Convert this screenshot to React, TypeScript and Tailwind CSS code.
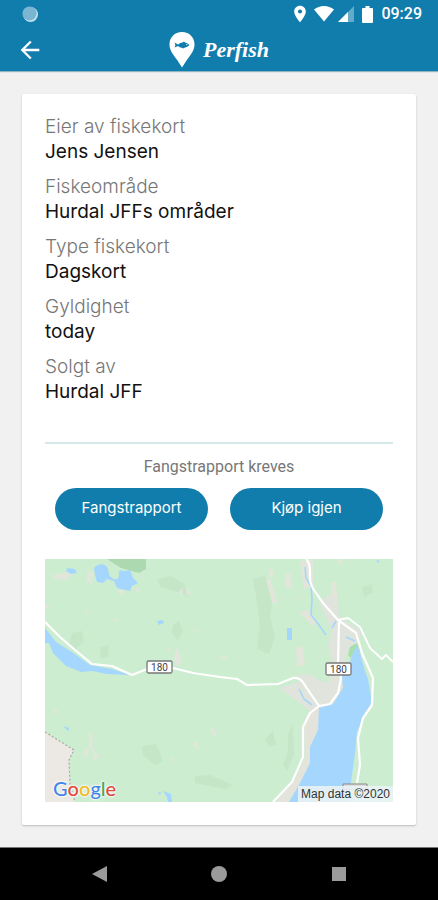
import { MdArrowBack, MdLocationOn } from "react-icons/md";

const details = [
  { label: "Eier av fiskekort", value: "Jens Jensen" },
  { label: "Fiskeområde", value: "Hurdal JFFs områder" },
  { label: "Type fiskekort", value: "Dagskort" },
  { label: "Gyldighet", value: "today" },
  { label: "Solgt av", value: "Hurdal JFF" },
];

function StatusBar() {
  return (
    <div className="flex h-7 items-center justify-between pl-[22px] pr-4 text-white">
      <svg viewBox="0 0 16 16" className="size-4" aria-hidden="true">
        <circle cx="8.5" cy="8.5" r="7.5" fill="#c6e2ee" />
        <circle cx="7.5" cy="7.5" r="7" fill="#7ab6d2" />
      </svg>
      <div className="flex items-center">
        <MdLocationOn className="mr-1 size-5" aria-hidden="true" />
        <svg viewBox="0 0 20 16" className="mr-1 h-4 w-5" fill="currentColor" aria-hidden="true">
          <path d="M10 15.500 0 3.500C3 1.200 6.200 0 10 0s7 1.200 10 3.500z" />
        </svg>
        <svg viewBox="0 0 16 16" className="mr-2 size-4" fill="currentColor" aria-hidden="true">
          <path d="M16 0v16H0z" opacity=".35" />
          <path d="M10 6v10H0z" />
        </svg>
        <svg viewBox="0 0 11 17" className="mr-2 h-[17px] w-[11px]" fill="currentColor" aria-hidden="true">
          <path d="M3.500 0h4v2H10a1 1 0 0 1 1 1v13a1 1 0 0 1-1 1H1a1 1 0 0 1-1-1V3a1 1 0 0 1 1-1h2.500z" />
        </svg>
        <time className="font-[Roboto,sans-serif] text-base leading-5 font-medium">09:29</time>
      </div>
    </div>
  );
}

function Logo() {
  return (
    <div className="flex items-center gap-2 text-white">
      <svg viewBox="0 0 26 36" className="h-9 w-[26px]" aria-hidden="true">
        <path d="M13 0C5.500 0 .5 5.500 .5 12.500c0 6 4 10.500 8 16L13 35.500l4.500-7c4-5.500 8-10 8-16C25.500 5.500 20.500 0 13 0z" fill="#fff" />
        <path d="M5.500 10.500l3.500 2c1.500-1.400 3-2 4.500-2.100l1.500-.8 1 .9c2.200.4 3.500 1.400 4.300 2.600-1 1.500-2.700 2.400-4.800 2.700l-1.500.8-.8-.8c-1.700-.2-3-.8-4.200-1.900l-3.300 1.600.7-2.600z" fill="#117dad" />
        <circle cx="17.800" cy="12.600" r=".6" fill="#fff" />
      </svg>
      <span className="font-['Liberation_Serif',serif] text-[22px] leading-7 font-bold italic">Perfish</span>
    </div>
  );
}

function RoadSign({ x, y }: { x: number; y: number }) {
  return (
    <g>
      <rect x={x} y={y} width="25" height="12" rx="1.500" fill="#fff" stroke="#777" strokeWidth="1.300" />
      <text x={x + 12.5} y={y + 9.5} textAnchor="middle" fontSize="10" fill="#444" className="font-[Roboto,sans-serif]">
        180
      </text>
    </g>
  );
}

function AreaMap() {
  return (
    <div className="relative">
      <svg viewBox="0 0 348 243" className="block w-full" role="img" aria-label="Kart over fiskeområdet">
        <rect width="348" height="243" fill="#cdedd0" />
        <path d="M62 0h39v10l-7 4-18-5z" fill="#acd9b0" />
        <g fill="#c5e7c8">
          <path d="M112 20l14-3 13 8 6 13-12-5-17-5zM27 74l10-2 2 10-8 8-7-5zM56 88l8-2-1 12-8 2zM128 66l6-4 4 10-5 9-6-7z" />
          <path d="M208 20l12-4 8 20-3 22 5 20-6 17-12-5 3-22-3-25zM97 187l14-2 7 17-8 4-12-10zM150 217l15-1 23 10-8 4-30-6zM220 180l8-8 3 13-7 3zM243 174l5-8 1 30-7 16-4-6 5-14zM317 28l10-3 1 8-9 5z" />
        </g>
        <path d="M0 173l29 18-5 10 1 24 5 18H0z" fill="#ece9e4" />
        <path d="M0 173l29 18-5 10 1 24 5 18" fill="none" stroke="#a5aaa4" strokeWidth="1.200" strokeDasharray="2 2" />
        <g fill="#e2e6da">
          <path d="M7 16l14-2 2-4 6 3-7 8-12-1zM42 13l6-1-1 14-5-4zM72 32l8-2-2 6zM88 30l7-1-2 4zM134 33l4-5-1 10zM142 27l4 10-5-2zM39 53l3-3-1 6zM67 60l4-2 1 5zM148 68l7 5-4-1zM132 88l2 6 3 10-6 3-2-8zM121 91l5-2-1 5zM0 45l5 3-4 2z" />
          <path d="M224 8l5 5-2 8-3-6zM240 15l5-1 2 16-6-2zM221 21l4-1 8 25-6-2zM255 3l13-3v28l-9 2zM286 22l5 1 2 26-7-4zM253 37l2-3-2 10zM251 87l7 2 2 17-8 2zM173 100l10-4-1 4zM254 53l10-2 8 11-4 5zM291 0l7 1-3 5z" />
          <path d="M8 149l5 2-1 5zM44 173l3 2 1 18-4-5zM40 190l4-1-2 10-3-3zM48 190l6 7-5 5zM147 185l5-3 2 9zM166 168l4 3 1 8-5-5zM126 200l3-2-1 6zM180 178l7 4-4-3z" />
        </g>
        <path d="M275 44l9-9 9 9 1 14 23 14-5 14-8 3-4 12 1 20-9 23-12 4-8 1-6 4-15-12-17-12 20-6-3-7 13-1 12 7 7 2 5-17-5-20 4-14z" fill="#e0e4dc" />
        <path d="M274 149l-13 8-2 14 1 28-11 23-18 21h12l14-20 9-19-1-17 9-16z" fill="#e4e4dd" />
        <path d="M0 69l11 14 16 10 18 13 22 4 18 6-24-1-13-3-12 1-15-6L8 94 4 84H0z" fill="#a5d6fd" />
        <path d="M49 9c4-5 12-5 14 1 1 5 1 8 6 10 4 1 5-1 5-5-1-4 2-4 6-3l5-1 3 8 5 5-6 3-2 5-5-1-8-2-3-7-7-2-4 4-6-1-2-7zM22 9l8 1 2 4-6 1-5-3zM112 62l6-1 1 3-5 2zM242 69h5v12h-5zM331 1l4 1-2 2zM18 167l6 2-1 3zM113 233l4 1-3 2zM118 232l8 3 1 8h-4l-1-5z" fill="#a5d6fd" />
        <path d="M260 8l1 11 5 8 1 14-1 15 8 10 7 10M291 62l-4 7M301 78l9 4M254 130l5 10 8 6" fill="none" stroke="#a5d6fd" strokeWidth="1.600" />
        <path d="M305 88l7-4 3 8-8 8-4-4z" fill="#a8dfa8" />
        <path d="M312 86l3 8 5 18 3 8 4 23-9 15-6 15-2 21-4 30-2 19h-60l11-19 10-20v-16l8-17 1-22 14-4 10-16-1-13 7-4 2-14z" fill="#a5d6fd" />
        <g fill="none" stroke="#fff" strokeWidth="2.200" strokeLinejoin="round">
          <path d="M0 63l15 15 15 13 17 14 20 2 20 9 15-6 26-1 20 5 27 4 17 2 10 6 31-1 15-6c8-1 10 4 13 9l13 19 11-2 8-11 3-15-3-15 1-41" />
          <path d="M274 147l-9 7-7 14v30l-11 25-19 20" />
          <path d="M261 0c4 3 4 9 4 14 0 8 0 11 4 17l9 13 15 17 18 13 6 20 11 25-1 27-9 13-5 20 2 27-3 18" />
          <path d="M293 61l10-2 12 9 10 21 12 11 4-4 7 7" strokeWidth="1.800" />
        </g>
        <RoadSign x={102} y={102} />
        <RoadSign x={281} y={104} />
        <path d="M298 225h24v5h-24z" fill="#ddd" stroke="#888" />
      </svg>
      <div className="absolute bottom-0 left-2 flex font-[Lato,sans-serif] text-xl leading-7 font-medium [text-shadow:0_0_2px_#fff,0_0_2px_#fff,0_0_3px_#fff]">
        <span className="text-[#4285e8]">G</span>
        <span className="text-[#df4b3e]">o</span>
        <span className="text-[#f1b928]">o</span>
        <span className="text-[#4285e8]">g</span>
        <span className="text-[#45a65b]">l</span>
        <span className="text-[#df4b3e]">e</span>
      </div>
      <div className="absolute right-0 bottom-0 bg-[#e9f3f5]/90 px-[3px] font-['Liberation_Sans',sans-serif] text-xs leading-4 text-[#333]">
        Map data ©2020
      </div>
    </div>
  );
}

function ActionButton({ children }: { children: string }) {
  return (
    <button type="button" className="h-[42px] rounded-full bg-[#117dad] pb-[2px] text-[15px] leading-5 text-white">
      {children}
    </button>
  );
}

export default function App() {
  return (
    <div className="flex min-h-screen flex-col bg-[#f1f1f1] font-[Inter,sans-serif]">
      <header className="bg-[#117dad] shadow-[0_1px_1px_#8fb4c6]">
        <StatusBar />
        <div className="grid grid-cols-[1fr_auto_1fr] items-center pt-1 pb-[3px]">
          <button type="button" aria-label="Tilbake" className="ml-4 w-7 text-white">
            <MdArrowBack className="size-7" />
          </button>
          <Logo />
        </div>
      </header>

      <main className="flex-1 px-[22px] pt-[23px] pb-[22px]">
        <section className="rounded-xs bg-white px-[23px] pt-5 pb-[23px] shadow-[0_1px_2px_#bbb]">
          <dl className="flex flex-col gap-[10px] text-[19px] leading-[25px]">
            {details.map(({ label, value }) => (
              <div key={label}>
                <dt className="font-light text-[#777]">{label}</dt>
                <dd className="text-[#111]">{value}</dd>
              </div>
            ))}
          </dl>
          <hr className="mt-[38px] border-t-2 border-[#d5e9ea]" />
          <p className="mt-[11px] text-center font-[Roboto,sans-serif] text-base leading-6 text-[#777]">Fangstrapport kreves</p>
          <div className="mt-[9px] mb-[29px] grid grid-cols-2 gap-[22px] px-[10px]">
            <ActionButton>Fangstrapport</ActionButton>
            <ActionButton>Kjøp igjen</ActionButton>
          </div>
          <AreaMap />
        </section>
      </main>

      <nav aria-label="Systemnavigasjon" className="border-t border-[#777] bg-black text-[#9b9b9b]">
        <div className="mx-auto grid h-[52px] max-w-[360px] grid-cols-3 items-center justify-items-center">
          <button type="button" aria-label="Tilbake">
            <svg viewBox="0 0 15 16" className="h-4 w-[15px]" fill="currentColor"><path d="M15 0v16L0 8z" /></svg>
          </button>
          <button type="button" aria-label="Hjem" className="size-4 rounded-full bg-[#9b9b9b]" />
          <button type="button" aria-label="Oversikt" className="size-[14px] bg-[#9b9b9b]" />
        </div>
      </nav>
    </div>
  );
}
